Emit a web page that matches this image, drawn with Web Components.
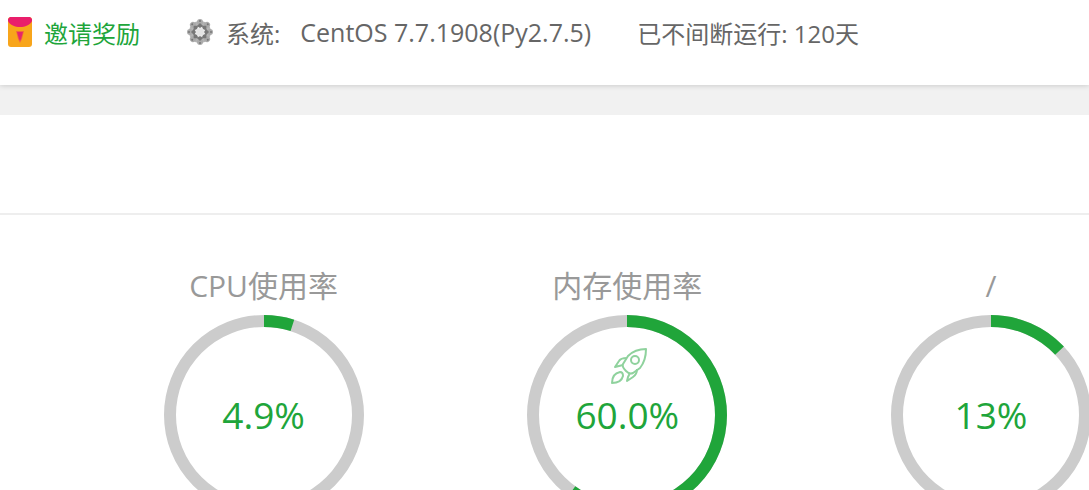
<!DOCTYPE html>
<html lang="zh-CN">
<head>
<meta charset="utf-8">
<title>首页</title>
<style>
  body {
    margin: 0;
    background: #f1f1f1;
    color: #666;
    font-family: "Open Sans", "Noto Sans CJK SC", sans-serif;
    font-size: 24px;
    overflow: hidden;
  }
</style>
</head>
<body>
<server-bar>
  <invite-link href="#invite">邀请奖励</invite-link>
  <system-info>
    <span slot="label">系统:</span>
    <span slot="value">CentOS 7.7.1908(Py2.7.5)</span>
  </system-info>
  <span>已不间断运行: 120天</span>
</server-bar>
<status-panel>
  <usage-gauge percent="0"></usage-gauge>
  <usage-gauge percent="4.9" value="4.9%">CPU使用率</usage-gauge>
  <usage-gauge percent="60" value="60.0%" boost>内存使用率</usage-gauge>
  <usage-gauge percent="13" value="13%">/</usage-gauge>
</status-panel>

<script>
class ServerBar extends HTMLElement {
  constructor() {
    super();
    this.attachShadow({ mode: "open" });
    this.shadowRoot.innerHTML = `
      <style>
        :host {
          display: block;
          background: #fff;
          box-shadow: 0 0 6px rgba(0, 0, 0, .2);
          padding-bottom: 21px;
        }
        header {
          display: flex;
          align-items: center;
          gap: 46px;
          height: 64px;
          padding-left: 8px;
          white-space: nowrap;
        }
      </style>
      <header><slot></slot></header>
    `;
  }
}
customElements.define("server-bar", ServerBar);

class InviteLink extends HTMLElement {
  connectedCallback() {
    this.attachShadow({ mode: "open" });
    this.shadowRoot.innerHTML = `
      <style>
        :host { display: block; }
        a {
          display: flex;
          align-items: center;
          gap: 12px;
          color: #20a53a;
          text-decoration: none;
        }
      </style>
      <a href="${this.getAttribute("href")}">
        <svg width="24" height="30" viewBox="0 0 24 30" aria-hidden="true">
          <rect width="24" height="30" rx="3" fill="#f8a51b"/>
          <path d="M2 0h20l2 2v2c-2 4-7 6-12 6S2 8 0 4V2z" fill="#e91e6b"/>
          <path d="M8 14h8l-2 8-2 4-2-4z" fill="#f2683c"/>
          <path d="M9 15h6l-2 7-1 2-1-2z" fill="#e6246b"/>
        </svg>
        <slot></slot>
      </a>
    `;
  }
}
customElements.define("invite-link", InviteLink);

class SystemInfo extends HTMLElement {
  constructor() {
    super();
    this.attachShadow({ mode: "open" });
    // eight identical petals around the hub
    let petals = "";
    for (let i = 0; i < 8; i++) {
      petals += `
        <g transform="rotate(${i * 45} 14 14)">
          <circle cx="14" cy="4" r="3" fill="#aaa"/>
          <circle cx="14" cy="3" r="1" fill="#777"/>
          <path d="M14 5l3 3-3 2-3-2z" fill="#777"/>
        </g>`;
    }
    this.shadowRoot.innerHTML = `
      <style>
        :host { display: flex; align-items: center; }
        svg { margin-right: 12px; }
        .value { margin-left: 20px; font-size: 25px; }
      </style>
      <svg width="28" height="28" viewBox="0 0 28 28" aria-hidden="true">
        <circle cx="14" cy="14" r="8" fill="none" stroke="#b4b4b4" stroke-width="6"/>
        ${petals}
        <circle cx="14" cy="14" r="4" fill="#e4e4e4"/>
      </svg>
      <slot name="label"></slot>
      <div class="value"><slot name="value"></slot></div>
    `;
  }
}
customElements.define("system-info", SystemInfo);

class StatusPanel extends HTMLElement {
  constructor() {
    super();
    this.attachShadow({ mode: "open" });
    this.shadowRoot.innerHTML = `
      <style>
        :host {
          display: block;
          margin-top: 30px;
          background: #fff;
          overflow: hidden;
        }
        .title {
          height: 98px;
          border-bottom: 2px solid #eee;
        }
        .gauges {
          display: grid;
          grid-auto-flow: column;
          grid-auto-columns: 33.4%;
          width: 100vw;
          margin-left: -282px;
          padding: 50px 0;
        }
      </style>
      <div class="title"></div>
      <div class="gauges"><slot></slot></div>
    `;
  }
}
customElements.define("status-panel", StatusPanel);

class UsageGauge extends HTMLElement {
  connectedCallback() {
    this.attachShadow({ mode: "open" });
    this.shadowRoot.innerHTML = `
      <style>
        :host {
          display: flex;
          flex-direction: column;
          align-items: center;
        }
        .name {
          height: 50px;
          line-height: 42px;
          font-size: 30px;
          color: #999;
        }
        .ring {
          position: relative;
          display: grid;
          place-items: center;
        }
        .ring > * { grid-area: 1 / 1; }
        .value {
          padding-bottom: 2px;
          font-size: 37px;
          color: #20a53a;
        }
        .rocket {
          position: absolute;
          top: 33px;
          left: 84px;
        }
      </style>
      <div class="name"><slot></slot></div>
      <div class="ring">
        <svg width="200" height="200" viewBox="0 0 200 200" fill="none" stroke-width="12" aria-hidden="true">
          <circle cx="100" cy="100" r="94" stroke="#ccc"/>
          ${this.getArc()}
        </svg>
        <div class="value">${this.getAttribute("value") || ""}</div>
        ${this.hasAttribute("boost") ? this.getRocket() : ""}
      </div>
    `;
  }
  getArc() {
    const percent = Number(this.getAttribute("percent"));
    if (!percent) return "";
    return `<circle cx="100" cy="100" r="94" stroke="#20a53a" pathLength="100"
      stroke-dasharray="${percent} 100" transform="rotate(-90 100 100)"/>`;
  }
  getRocket() {
    return `
      <svg class="rocket" width="36" height="36" viewBox="0 0 36 36" fill="none"
        stroke="#8fd29d" stroke-width="2" stroke-linejoin="round" aria-hidden="true">
        <path d="M35 1C27 1 21 4 17 8l-5 8c-1 2 0 4 3 7s5 3 7 2l7-5C33 15 35 8 35 1z"/>
        <circle cx="24" cy="12" r="4"/>
        <path d="M16 10c-4 0-7 1-8 3l-4 6 4-1 4-1"/>
        <path d="M26 21c0 3-1 6-4 8l-6 4 1-4 2-4"/>
        <path d="M9 24c-5 1-8 4-8 11 6 0 10-3 11-7 0-3-1-4-3-4z"/>
      </svg>
    `;
  }
}
customElements.define("usage-gauge", UsageGauge);
</script>
</body>
</html>
